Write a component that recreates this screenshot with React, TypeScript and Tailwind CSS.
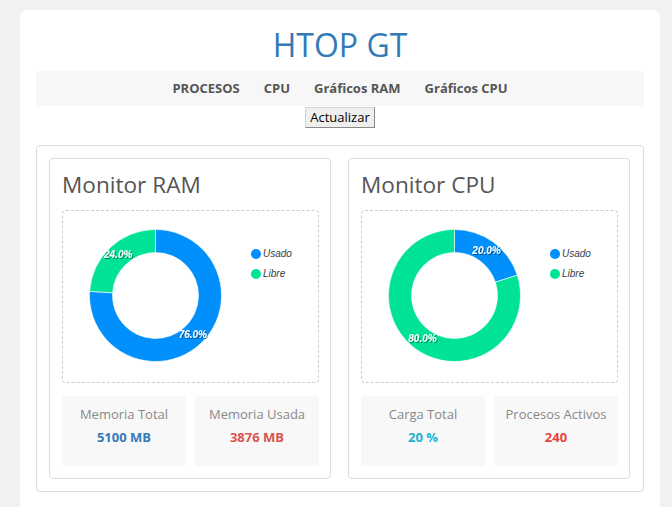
import React from "react";

type Slice = { value: number; color: string };

function arcPath(cx: number, cy: number, r: number, ri: number, a0: number, a1: number) {
  const p = (rad: number, a: number) => [cx + rad * Math.sin(a), cy - rad * Math.cos(a)];
  const large = a1 - a0 > Math.PI ? 1 : 0;
  const [x0, y0] = p(r, a0);
  const [x1, y1] = p(r, a1);
  const [x2, y2] = p(ri, a1);
  const [x3, y3] = p(ri, a0);
  return `M${x0} ${y0} A${r} ${r} 0 ${large} 1 ${x1} ${y1} L${x2} ${y2} A${ri} ${ri} 0 ${large} 0 ${x3} ${y3} Z`;
}

function Donut({ slices }: { slices: Slice[] }) {
  const cx = 92.5;
  const cy = 84.5;
  const r = 66;
  const ri = 43;
  const total = slices.reduce((s, x) => s + x.value, 0);
  let acc = 0;
  const parts = slices.map((s) => {
    const a0 = (acc / total) * Math.PI * 2;
    acc += s.value;
    const a1 = (acc / total) * Math.PI * 2;
    const mid = (a0 + a1) / 2;
    const lr = (r + ri) / 2;
    return {
      d: arcPath(cx, cy, r, ri, a0, a1),
      color: s.color,
      lx: cx + lr * Math.sin(mid),
      ly: cy - lr * Math.cos(mid),
      label: ((s.value / total) * 100).toFixed(1) + "%",
    };
  });
  return (
    <svg width="255" height="171" viewBox="0 0 255 171" className="block">
      <defs>
        <filter id="ts" x="-20%" y="-20%" width="140%" height="140%">
          <feDropShadow dx="1" dy="1" stdDeviation="0.6" floodColor="#000" floodOpacity="0.45" />
        </filter>
      </defs>
      {parts.map((p, i) => (
        <path key={i} d={p.d} fill={p.color} stroke="#fff" strokeWidth="0.6" />
      ))}
      {parts.map((p, i) => (
        <text
          key={"t" + i}
          x={p.lx}
          y={p.ly}
          textAnchor="middle"
          dominantBaseline="middle"
          fill="#fff"
          fontSize="10"
          fontWeight="bold"
          fontStyle="italic"
          fontFamily="'Liberation Sans', Arial, sans-serif"
          filter="url(#ts)"
        >
          {p.label}
        </text>
      ))}
      <circle cx="193" cy="43" r="5" fill="#008ffb" />
      <text x="200" y="43" dominantBaseline="middle" fontSize="10" fontStyle="italic" fill="#373d3f" fontFamily="'Liberation Sans', Arial, sans-serif">
        Usado
      </text>
      <circle cx="193" cy="63" r="5" fill="#00e396" />
      <text x="200" y="63" dominantBaseline="middle" fontSize="10" fontStyle="italic" fill="#373d3f" fontFamily="'Liberation Sans', Arial, sans-serif">
        Libre
      </text>
    </svg>
  );
}

function Stat({ label, value, color }: { label: string; value: string; color: string }) {
  return (
    <div className="flex-1 h-[70px] rounded-[3px] bg-[#f8f8f8] flex flex-col items-center pt-[9px]">
      <div className="text-[13px] leading-[18px] text-[#888]">{label}</div>
      <div className={`text-[13px] leading-[18px] font-bold mt-[5px] ${color}`}>{value}</div>
    </div>
  );
}

function Card({
  title,
  slices,
  stats,
}: {
  title: string;
  slices: Slice[];
  stats: { label: string; value: string; color: string }[];
}) {
  return (
    <div className="w-[282px] h-[321px] border border-[#ddd] rounded-[4px] px-[12px] pt-[10px]">
      <div className="text-[22.6px] leading-[32px] text-[#555]">{title}</div>
      <div className="mt-[9px] w-[257px] h-[173px] border border-dashed border-[#ccc] rounded-[4px]">
        <Donut slices={slices} />
      </div>
      <div className="mt-[13px] flex gap-[9px] w-[257px]">
        {stats.map((s) => (
          <Stat key={s.label} {...s} />
        ))}
      </div>
    </div>
  );
}

export default function App() {
  return (
    <div className="min-h-[507px] bg-[#f2f2f2] pt-[10px] pl-[20px]" style={{ fontFamily: "'Open Sans', 'Noto Sans', sans-serif" }}>
      <div className="w-[640px] min-h-[520px] bg-white rounded-[8px] px-[16px] pt-[13px]">
        <h1 className="text-center text-[32px] leading-[43px] text-[#337ab7]">HTOP GT</h1>
        <nav className="mt-[5px] h-[35px] bg-[#f7f7f7] rounded-[4px] flex items-center justify-center gap-[24px] text-[13px] font-bold text-[#555]">
          <span>PROCESOS</span>
          <span>CPU</span>
          <span>Gráficos RAM</span>
          <span>Gráficos CPU</span>
        </nav>
        <div className="flex justify-center mt-[1px]">
          <button className="h-[21px] px-[4px] text-[13px] leading-[19px] text-black bg-[#efefef] border border-t-[#d4d4d4] border-l-[#d4d4d4] border-r-[#8a8a8a] border-b-[#8a8a8a]">
            Actualizar
          </button>
        </div>
        <div className="mt-[17px] border border-[#ddd] rounded-[4px] p-[12px] flex gap-[17px]">
          <Card
            title="Monitor RAM"
            slices={[
              { value: 76, color: "#008ffb" },
              { value: 24, color: "#00e396" },
            ]}
            stats={[
              { label: "Memoria Total", value: "5100 MB", color: "text-[#337ab7]" },
              { label: "Memoria Usada", value: "3876 MB", color: "text-[#d9534f]" },
            ]}
          />
          <Card
            title="Monitor CPU"
            slices={[
              { value: 20, color: "#008ffb" },
              { value: 80, color: "#00e396" },
            ]}
            stats={[
              { label: "Carga Total", value: "20 %", color: "text-[#19b4d6]" },
              { label: "Procesos Activos", value: "240", color: "text-[#e94040]" },
            ]}
          />
        </div>
      </div>
    </div>
  );
}
